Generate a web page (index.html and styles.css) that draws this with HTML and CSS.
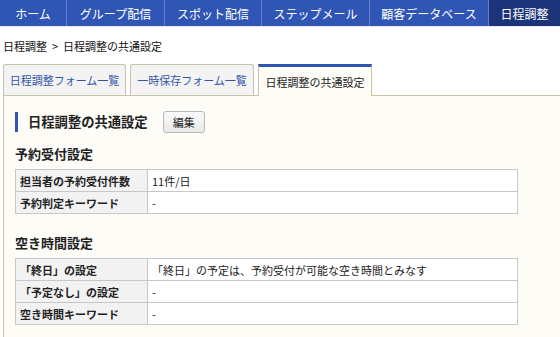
FILE: index.html
```html
<!DOCTYPE html>
<html>
<head>
  <meta charset="utf-8">
  <title>日程調整の共通設定</title>
  <link rel="stylesheet" href="styles.css">
</head>
<body>
  <ul class="nav">
    <li class="nav-item" style="width: 67px;">ホーム</li>
    <li class="nav-item" style="width: 98px;">グループ配信</li>
    <li class="nav-item" style="width: 97px;">スポット配信</li>
    <li class="nav-item" style="width: 108px;">ステップメール</li>
    <li class="nav-item" style="width: 119px;">顧客データベース</li>
    <li class="nav-item nav-item--active">日程調整</li>
  </ul>

  <div class="breadcrumb">日程調整 &nbsp;&gt;&nbsp; 日程調整の共通設定</div>

  <div class="tabs">
    <div class="tab">日程調整フォーム一覧</div>
    <div class="tab">一時保存フォーム一覧</div>
    <div class="tab tab--active">日程調整の共通設定</div>
  </div>

  <div class="panel">
    <div class="title-row">
      <h2 class="title">日程調整の共通設定</h2>
      <button class="btn">編集</button>
    </div>

    <h3 class="section">予約受付設定</h3>
    <table class="settings">
      <tr>
        <th>担当者の予約受付件数</th>
        <td>11件/日</td>
      </tr>
      <tr>
        <th>予約判定キーワード</th>
        <td>-</td>
      </tr>
    </table>

    <h3 class="section">空き時間設定</h3>
    <table class="settings">
      <tr>
        <th>「終日」の設定</th>
        <td>「終日」の予定は、予約受付が可能な空き時間とみなす</td>
      </tr>
      <tr>
        <th>「予定なし」の設定</th>
        <td>-</td>
      </tr>
      <tr>
        <th>空き時間キーワード</th>
        <td>-</td>
      </tr>
    </table>
  </div>
</body>
</html>
```

FILE: styles.css
```css
body {
  margin: 0;
  font-family: "Noto Sans CJK JP", "Liberation Sans", sans-serif;
  font-size: 11px;
  color: #222;
  background: #fff;
  overflow: hidden;
}

.nav {
  display: flex;
  margin: 0;
  padding: 0;
  list-style: none;
  height: 26px;
  background: #2f55b5;
  border-bottom: 1px solid #e8e8e8;
}

.nav-item {
  box-sizing: border-box;
  display: flex;
  align-items: center;
  justify-content: center;
  color: #fff;
  font-size: 12px;
  border-right: 1px solid #6680c8;
}

.nav-item--active {
  flex: 1;
  background: #1c3479;
  border-right: none;
}

.breadcrumb {
  padding: 12px 3px 0;
  height: 24px;
  line-height: 15px;
  font-size: 11px;
  color: #111;
}

.tabs {
  display: flex;
  gap: 4px;
  padding-left: 3px;
  align-items: flex-end;
  height: 32px;
}

.tab {
  box-sizing: border-box;
  height: 31px;
  padding: 0;
  display: flex;
  align-items: center;
  justify-content: center;
  white-space: nowrap;
  background: #f3f3f3;
  color: #3355aa;
  border: 1px solid #cbc3a6;
  border-bottom: none;
  border-radius: 3px 3px 0 0;
  font-size: 11px;
}

.tab:nth-child(1) { width: 123px; }
.tab:nth-child(2) { width: 124px; }

.tab--active {
  height: 32px;
  width: 114px;
  background: #fdfcf7;
  color: #222;
  border-top: 3px solid #2f55b5;
  border-radius: 0;
  position: relative;
  top: 1px;
}

.panel {
  box-sizing: border-box;
  margin-left: 3px;
  border-left: 1px solid #cbc3a6;
  border-top: 1px solid #cbc3a6;
  background: #fdfcf7;
  padding: 15px 0 0 11px;
  height: calc(100vh - 95px);
}

.title-row {
  display: flex;
  align-items: center;
  gap: 15px;
  height: 22px;
}

.title {
  margin: 0;
  font-size: 13.3px;
  font-weight: bold;
  border-left: 3px solid #2f55b5;
  padding-left: 10px;
  line-height: 20px;
}

.btn {
  height: 22px;
  width: 42px;
  padding: 0;
  font-family: inherit;
  font-size: 11px;
  color: #222;
  background: linear-gradient(#fafafa, #e9e9e9);
  border: 1px solid #b9b9b9;
  border-radius: 3px;
}

.section {
  margin: 12px 0 7px;
  font-size: 13px;
  font-weight: bold;
  line-height: 17px;
}

.settings {
  width: 503px;
  margin-bottom: 20px;
  border-collapse: collapse;
  background: #fff;
  font-size: 11px;
}

.settings th,
.settings td {
  height: 21px;
  padding: 0 4px;
  border: 1px solid #c7c7c7;
  text-align: left;
  white-space: nowrap;
}

.settings th {
  width: 123px;
  background: #f2f2f2;
  font-weight: bold;
}
```
